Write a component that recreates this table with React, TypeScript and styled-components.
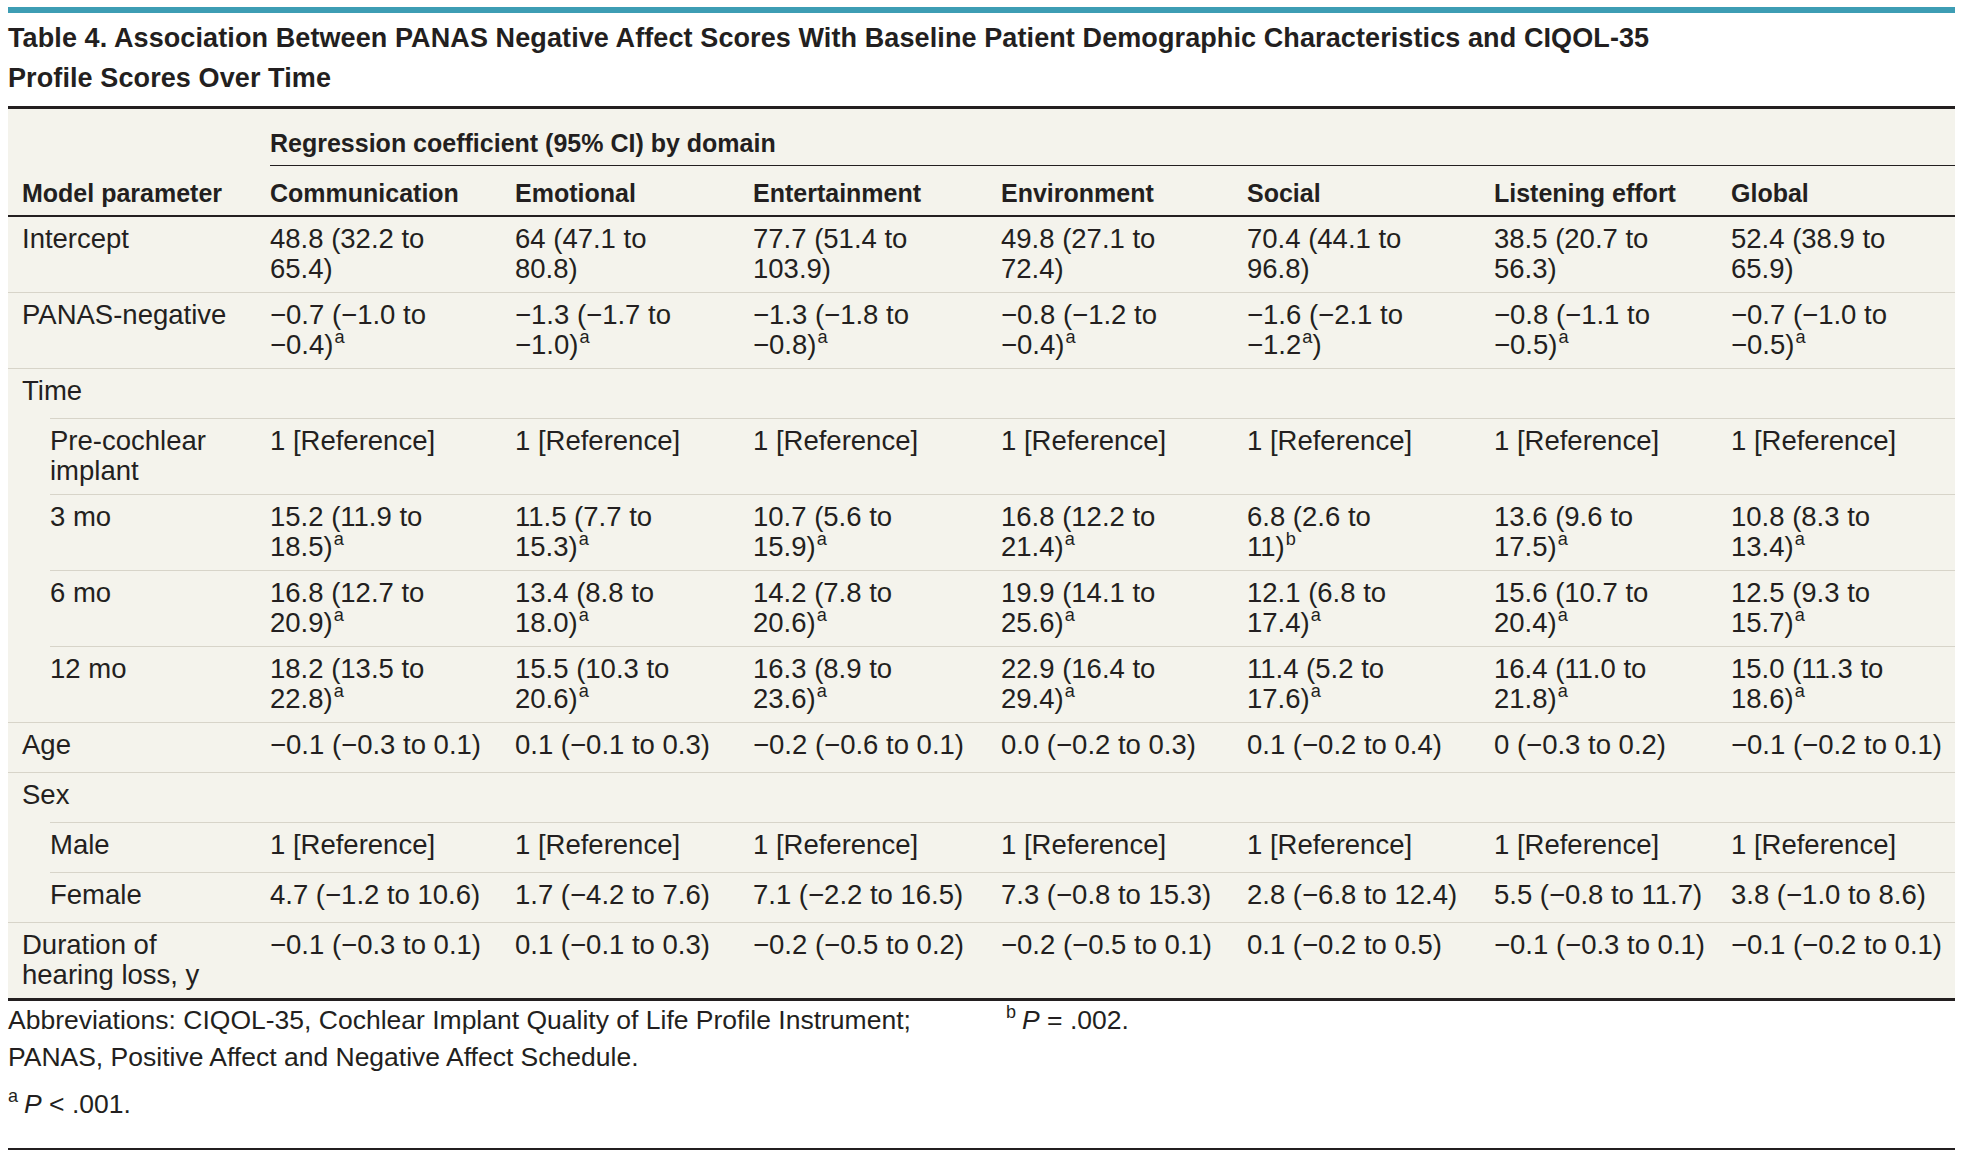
import React from "react";
import styled, { createGlobalStyle, css } from "styled-components";

const INK = "#231f20";
const RULE = "#d7d4c9";
const PAPER = "#f4f3ec";
const TEAL = "#3d9db4";

const GlobalStyle = createGlobalStyle`
  html, body { margin: 0; padding: 0; background: #ffffff; }
  body {
    font-family: "Liberation Sans", Arial, sans-serif;
    color: ${INK};
    -webkit-font-smoothing: antialiased;
  }
`;

const Page = styled.div`
  padding: 7px 8px 0;
`;

const TopBar = styled.div`
  height: 6px;
  background: ${TEAL};
`;

const Title = styled.h1`
  margin: 5px 0 8px;
  font-size: 27px;
  line-height: 40px;
  font-weight: 700;
  letter-spacing: 0.1px;
`;

const Table = styled.table`
  width: 100%;
  table-layout: fixed;
  border-collapse: separate;
  border-spacing: 0;
  background: ${PAPER};
  border-top: 3px solid ${INK};
  border-bottom: 3px solid ${INK};
`;

const HeadCell = styled.th<{ $label?: boolean; $span?: boolean }>`
  text-align: left;
  font-size: 25px;
  line-height: 30px;
  font-weight: 700;
  white-space: nowrap;
  padding: 12px 0 7px;
  vertical-align: bottom;
  border-bottom: 2px solid ${INK};
  ${(p) =>
    p.$label &&
    css`
      padding-left: 14px;
    `}
  ${(p) =>
    p.$span &&
    css`
      padding: 19px 0 7px;
      border-bottom: 1px solid ${INK};
    `}
`;

const Row = styled.tr`
  height: 50px;
`;

const Cell = styled.td<{ $first?: boolean }>`
  font-size: 27.5px;
  line-height: 30px;
  font-weight: 400;
  vertical-align: top;
  white-space: nowrap;
  padding: 7px 0 8px;
  border-top: 1px solid ${(p) => (p.$first ? "transparent" : RULE)};
  ${(p) =>
    p.$first &&
    css`
      border-top-width: 0;
    `}
`;

const LabelCell = styled(Cell)<{ $indent?: boolean }>`
  padding-left: ${(p) => (p.$indent ? "42px" : "14px")};
  ${(p) =>
    p.$indent &&
    !p.$first &&
    css`
      border-top-color: transparent;
      background: linear-gradient(${RULE}, ${RULE}) no-repeat 42px 0 / calc(100% - 42px) 1px;
      background-origin: border-box;
    `}
`;

const Line = styled.span`
  display: block;
`;

const Sup = styled.sup`
  font-size: 0.66em;
  line-height: 0;
  vertical-align: 0.62em;
  margin-left: 1px;
`;

const Notes = styled.div`
  display: grid;
  grid-template-columns: 958px 1fr;
  column-gap: 40px;
  margin-top: 1px;
`;

const NoteColumn = styled.div`
  display: flex;
  flex-direction: column;
  gap: 10px;
`;

const Note = styled.p`
  margin: 0;
  font-size: 26.5px;
  line-height: 37px;
`;

const NoteSup = styled.sup`
  font-size: 0.68em;
  line-height: 0;
  vertical-align: 0.6em;
  margin-right: 6px;
`;

const Ital = styled.i`
  font-style: italic;
`;

const EndRule = styled.div`
  height: 2px;
  background: ${INK};
  margin-top: 25px;
`;

const COLS = [262, 245, 238, 248, 246, 247, 237, 224];

const HEADERS = [
  "Communication",
  "Emotional",
  "Entertainment",
  "Environment",
  "Social",
  "Listening effort",
  "Global",
];

type RowData = { label: string; indent?: boolean; values?: string[] };

const REF = "1 [Reference]";

const ROWS: RowData[] = [
  {
    label: "Intercept",
    values: [
      "48.8 (32.2 to|65.4)",
      "64 (47.1 to|80.8)",
      "77.7 (51.4 to|103.9)",
      "49.8 (27.1 to|72.4)",
      "70.4 (44.1 to|96.8)",
      "38.5 (20.7 to|56.3)",
      "52.4 (38.9 to|65.9)",
    ],
  },
  {
    label: "PANAS-negative",
    values: [
      "−0.7 (−1.0 to|−0.4)^a",
      "−1.3 (−1.7 to|−1.0)^a",
      "−1.3 (−1.8 to|−0.8)^a",
      "−0.8 (−1.2 to|−0.4)^a",
      "−1.6 (−2.1 to|−1.2^a)",
      "−0.8 (−1.1 to|−0.5)^a",
      "−0.7 (−1.0 to|−0.5)^a",
    ],
  },
  { label: "Time" },
  {
    label: "Pre-cochlear|implant",
    indent: true,
    values: [REF, REF, REF, REF, REF, REF, REF],
  },
  {
    label: "3 mo",
    indent: true,
    values: [
      "15.2 (11.9 to|18.5)^a",
      "11.5 (7.7 to|15.3)^a",
      "10.7 (5.6 to|15.9)^a",
      "16.8 (12.2 to|21.4)^a",
      "6.8 (2.6 to|11)^b",
      "13.6 (9.6 to|17.5)^a",
      "10.8 (8.3 to|13.4)^a",
    ],
  },
  {
    label: "6 mo",
    indent: true,
    values: [
      "16.8 (12.7 to|20.9)^a",
      "13.4 (8.8 to|18.0)^a",
      "14.2 (7.8 to|20.6)^a",
      "19.9 (14.1 to|25.6)^a",
      "12.1 (6.8 to|17.4)^a",
      "15.6 (10.7 to|20.4)^a",
      "12.5 (9.3 to|15.7)^a",
    ],
  },
  {
    label: "12 mo",
    indent: true,
    values: [
      "18.2 (13.5 to|22.8)^a",
      "15.5 (10.3 to|20.6)^a",
      "16.3 (8.9 to|23.6)^a",
      "22.9 (16.4 to|29.4)^a",
      "11.4 (5.2 to|17.6)^a",
      "16.4 (11.0 to|21.8)^a",
      "15.0 (11.3 to|18.6)^a",
    ],
  },
  {
    label: "Age",
    values: [
      "−0.1 (−0.3 to 0.1)",
      "0.1 (−0.1 to 0.3)",
      "−0.2 (−0.6 to 0.1)",
      "0.0 (−0.2 to 0.3)",
      "0.1 (−0.2 to 0.4)",
      "0 (−0.3 to 0.2)",
      "−0.1 (−0.2 to 0.1)",
    ],
  },
  { label: "Sex" },
  {
    label: "Male",
    indent: true,
    values: [REF, REF, REF, REF, REF, REF, REF],
  },
  {
    label: "Female",
    indent: true,
    values: [
      "4.7 (−1.2 to 10.6)",
      "1.7 (−4.2 to 7.6)",
      "7.1 (−2.2 to 16.5)",
      "7.3 (−0.8 to 15.3)",
      "2.8 (−6.8 to 12.4)",
      "5.5 (−0.8 to 11.7)",
      "3.8 (−1.0 to 8.6)",
    ],
  },
  {
    label: "Duration of|hearing loss, y",
    values: [
      "−0.1 (−0.3 to 0.1)",
      "0.1 (−0.1 to 0.3)",
      "−0.2 (−0.5 to 0.2)",
      "−0.2 (−0.5 to 0.1)",
      "0.1 (−0.2 to 0.5)",
      "−0.1 (−0.3 to 0.1)",
      "−0.1 (−0.2 to 0.1)",
    ],
  },
];

function renderLine(text: string) {
  const parts = text.split(/\^([ab])/);
  return parts.map((p, i) =>
    i % 2 === 1 ? <Sup key={i}>{p}</Sup> : <React.Fragment key={i}>{p}</React.Fragment>
  );
}

function CellLines({ text }: { text: string }) {
  return (
    <>
      {text.split("|").map((line, i) => (
        <Line key={i}>{renderLine(line)}</Line>
      ))}
    </>
  );
}

export default function App() {
  return (
    <>
      <GlobalStyle />
      <Page>
        <TopBar />
        <Title>
          Table 4. Association Between PANAS Negative Affect Scores With Baseline Patient Demographic Characteristics and CIQOL-35
          <br />
          Profile Scores Over Time
        </Title>
        <Table>
          <colgroup>
            {COLS.map((w, i) => (
              <col key={i} style={{ width: w }} />
            ))}
          </colgroup>
          <thead>
            <tr>
              <HeadCell $label rowSpan={2}>
                Model parameter
              </HeadCell>
              <HeadCell $span colSpan={7}>
                Regression coefficient (95% CI) by domain
              </HeadCell>
            </tr>
            <tr>
              {HEADERS.map((h) => (
                <HeadCell key={h}>{h}</HeadCell>
              ))}
            </tr>
          </thead>
          <tbody>
            {ROWS.map((row, ri) => (
              <Row key={row.label}>
                <LabelCell $first={ri === 0} $indent={row.indent}>
                  <CellLines text={row.label} />
                </LabelCell>
                {row.values
                  ? row.values.map((v, ci) => (
                      <Cell key={ci} $first={ri === 0}>
                        <CellLines text={v} />
                      </Cell>
                    ))
                  : HEADERS.map((h) => <Cell key={h} $first={ri === 0} />)}
              </Row>
            ))}
          </tbody>
        </Table>
        <Notes>
          <NoteColumn>
            <Note>
              Abbreviations: CIQOL-35, Cochlear Implant Quality of Life Profile Instrument; PANAS, Positive Affect and
              Negative Affect Schedule.
            </Note>
            <Note>
              <NoteSup>a</NoteSup>
              <Ital>P</Ital> &lt; .001.
            </Note>
          </NoteColumn>
          <NoteColumn>
            <Note>
              <NoteSup>b</NoteSup>
              <Ital>P</Ital> = .002.
            </Note>
          </NoteColumn>
        </Notes>
        <EndRule />
      </Page>
    </>
  );
}
